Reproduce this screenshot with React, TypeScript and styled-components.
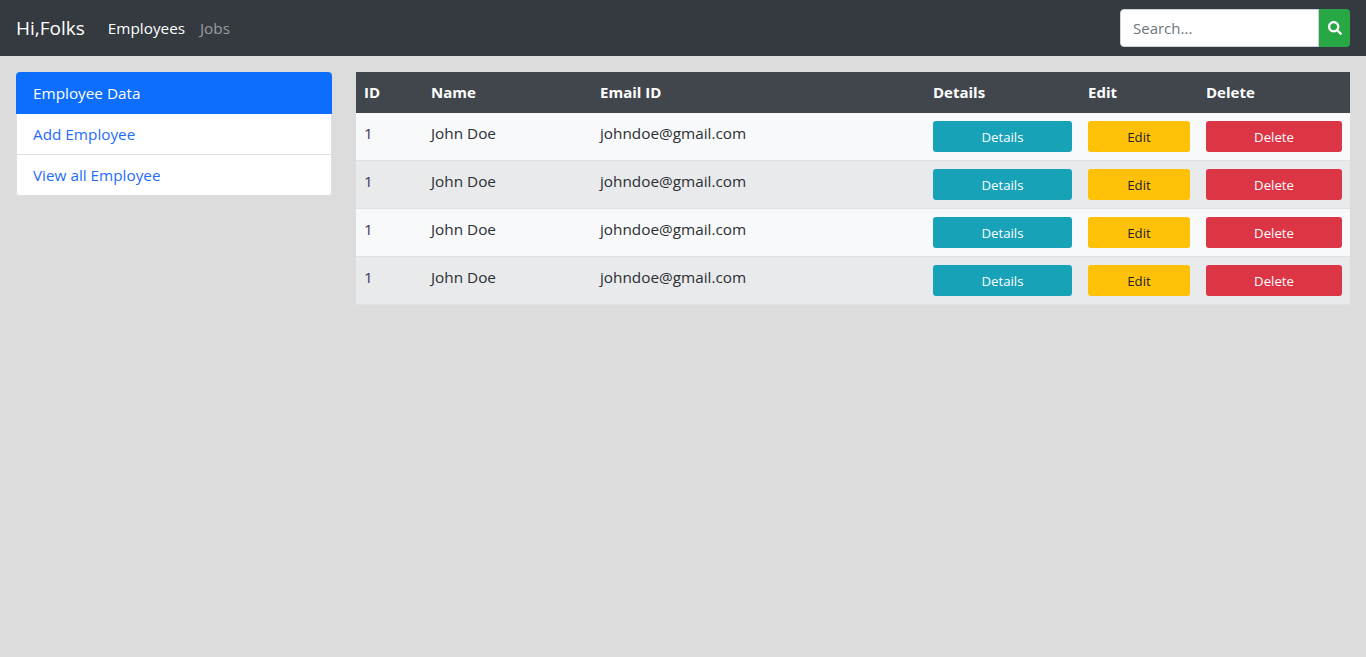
import React from 'react'
import styled, { createGlobalStyle } from 'styled-components'
import { FaSearch } from 'react-icons/fa'

const FONT = `"Open Sans", "Noto Sans", "Liberation Sans", sans-serif`

const GlobalStyle = createGlobalStyle`
  html, body {
    margin: 0;
    padding: 0;
    min-height: 100%;
    background: #dcdcdc;
  }
  * {
    box-sizing: border-box;
  }
  body {
    font-family: ${FONT};
    font-size: 15.3px;
    line-height: 24px;
    color: #2b2f33;
  }
`

const Navbar = styled.nav`
  display: flex;
  align-items: center;
  height: 56px;
  padding: 0 16px;
  background: #343a40;
`

const Brand = styled.a`
  font-size: 19px;
  line-height: 30px;
  color: #fff;
  margin-right: 23px;
`

const NavLink = styled.a<{ $active?: boolean }>`
  color: ${(p) => (p.$active ? '#fff' : 'rgba(255, 255, 255, 0.5)')};
  margin-right: 15px;
`

const SearchForm = styled.form`
  display: flex;
  margin-left: auto;
`

const SearchInput = styled.input`
  width: 199px;
  height: 38px;
  padding: 6px 12px;
  border: 1px solid #ced4da;
  border-radius: 4px 0 0 4px;
  font-family: ${FONT};
  font-size: 15px;
  background: #fff;
  &::placeholder {
    color: #6c757d;
    opacity: 1;
  }
`

const SearchButton = styled.button`
  display: flex;
  align-items: center;
  justify-content: center;
  width: 31px;
  height: 38px;
  padding: 0;
  border: none;
  border-radius: 0 4px 4px 0;
  background: #28a745;
  color: #fff;
  font-size: 14px;
`

const Page = styled.main`
  display: grid;
  grid-template-columns: 316px 994px;
  column-gap: 24px;
  align-items: start;
  padding: 16px;
`

const ListGroup = styled.div`
  display: flex;
  flex-direction: column;
  border-radius: 4px;
  overflow: hidden;
  background: #fff;
`

const ListHeader = styled.div`
  height: 42px;
  padding: 9px 17px;
  background: #0d6efd;
  color: #fff;
`

const ListLink = styled.a<{ $last?: boolean }>`
  height: 41px;
  padding: 8px 16px;
  color: #1f6bfd;
  border: 1px solid rgba(0, 0, 0, 0.125);
  border-top: none;
  border-radius: ${(p) => (p.$last ? '0 0 4px 4px' : '0')};
`

const Table = styled.table`
  width: 994px;
  table-layout: fixed;
  border-collapse: separate;
  border-spacing: 0;
`

const Head = styled.th<{ $width: number }>`
  width: ${(p) => p.$width}px;
  height: 41px;
  padding: 7px 8px 9px;
  background: #41464c;
  color: #fff;
  font-size: 15px;
  font-weight: 700;
  text-align: left;
  vertical-align: middle;
`

const Row = styled.tr<{ $odd: boolean }>`
  background: ${(p) => (p.$odd ? '#f8f9fa' : '#e9eaec')};
`

const Cell = styled.td`
  height: 48px;
  padding: 8px;
  vertical-align: top;
  border-bottom: 1px solid #dee2e6;
`

const IdCell = styled(Cell)`
  color: #3d3358;
`

const ActionButton = styled.button<{ $bg: string; $fg: string }>`
  display: block;
  width: 100%;
  height: 31px;
  padding: 1px 0 0;
  border: none;
  border-radius: 3px;
  background: ${(p) => p.$bg};
  color: ${(p) => p.$fg};
  font-family: ${FONT};
  font-size: 13.2px;
  line-height: 30px;
`

const COLUMNS: [string, number][] = [
  ['ID', 67],
  ['Name', 169],
  ['Email ID', 333],
  ['Details', 155],
  ['Edit', 118],
  ['Delete', 152],
]

const App: React.FC = () => {
  return (
    <>
      <GlobalStyle />
      <Navbar>
        <Brand>Hi,Folks</Brand>
        <NavLink $active>Employees</NavLink>
        <NavLink>Jobs</NavLink>
        <SearchForm onSubmit={(e) => e.preventDefault()}>
          <SearchInput placeholder="Search..." />
          <SearchButton aria-label="Search">
            <FaSearch />
          </SearchButton>
        </SearchForm>
      </Navbar>
      <Page>
        <ListGroup>
          <ListHeader>Employee Data</ListHeader>
          <ListLink>Add Employee</ListLink>
          <ListLink $last>View all Employee</ListLink>
        </ListGroup>
        <Table>
          <thead>
            <tr>
              {COLUMNS.map(([label, width]) => (
                <Head key={label} $width={width}>
                  {label}
                </Head>
              ))}
            </tr>
          </thead>
          <tbody>
            {[0, 1, 2, 3].map((i) => (
              <Row key={i} $odd={i % 2 === 0}>
                <IdCell>1</IdCell>
                <Cell>John Doe</Cell>
                <Cell>johndoe@gmail.com</Cell>
                <Cell>
                  <ActionButton $bg="#17a2b8" $fg="#fff">Details</ActionButton>
                </Cell>
                <Cell>
                  <ActionButton $bg="#ffc107" $fg="#212529">Edit</ActionButton>
                </Cell>
                <Cell>
                  <ActionButton $bg="#dc3545" $fg="#fff">Delete</ActionButton>
                </Cell>
              </Row>
            ))}
          </tbody>
        </Table>
      </Page>
    </>
  )
}

export default App
